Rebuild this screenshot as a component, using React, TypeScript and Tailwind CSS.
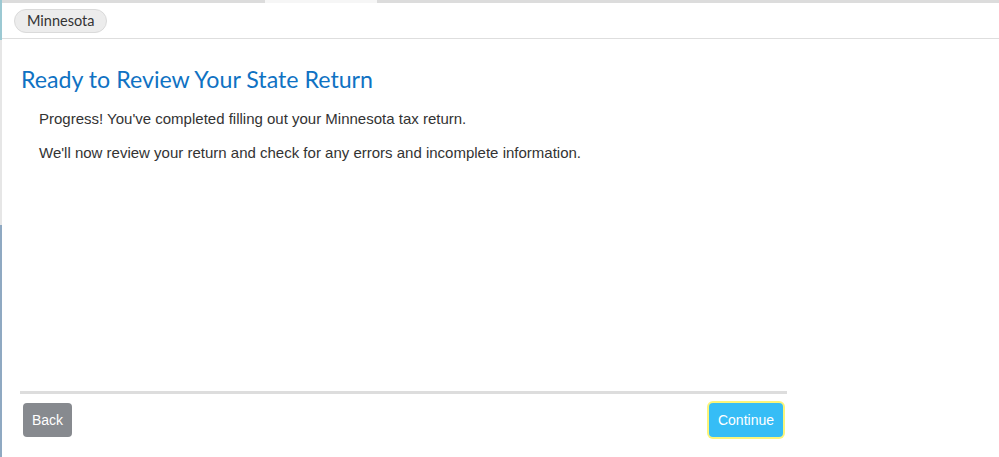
import React from "react";

export default function App() {
  return (
    <div className="w-[999px] h-[457px] bg-white overflow-hidden flex">
      <div className="w-[2px] flex flex-col shrink-0">
        <div className="h-[40px] bg-[#9cc9d3]" />
        <div className="h-[185px] bg-[#e6e6e6]" />
        <div className="flex-1 bg-[#8fa9c2]" />
      </div>
      <div className="flex-1 flex flex-col">
        <div className="h-[3px] flex">
          <div className="w-[263px] bg-[#dcdcdc]" />
          <div className="w-[112px] bg-[#f6f6f6]" />
          <div className="flex-1 bg-[#dcdcdc]" />
        </div>
        <div className="h-[36px] border-b border-[#dedede] flex items-center pl-[12px]">
          <span
            className="h-[24px] px-[12px] rounded-full bg-[#ececec] border border-[#dadada] text-[14.5px] text-[#333] flex items-center"
            style={{ fontFamily: "Lato, 'Open Sans', sans-serif" }}
          >
            Minnesota
          </span>
        </div>
        <div className="flex-1 flex flex-col w-[767px] ml-[18px]">
          <h1
            className="mt-[25px] text-[23.2px] leading-[30px] text-[#0f72c3] pl-[1px]"
            style={{ fontFamily: "Lato, 'Open Sans', sans-serif" }}
          >
            Ready to Review Your State Return
          </h1>
          <div
            className="pl-[19px] mt-[16px] text-[15px] text-[#333] flex flex-col gap-[16px]"
            style={{ fontFamily: "'Liberation Sans', Arial, sans-serif" }}
          >
            <p className="leading-[18px]">Progress! You've completed filling out your Minnesota tax return.</p>
            <p className="leading-[18px]">We'll now review your return and check for any errors and incomplete information.</p>
          </div>
          <div className="flex-1" />
          <div className="h-[3px] bg-[#dddddd]" />
          <div
            className="flex justify-between items-center mt-[9px] mb-[20px] pl-[3px] pr-[4px]"
            style={{ fontFamily: "'Liberation Sans', Arial, sans-serif" }}
          >
            <button className="h-[34px] px-[9px] rounded-[4px] bg-[#878a8f] text-white text-[14px]">Back</button>
            <button className="h-[34px] px-[9px] rounded-[4px] bg-[#36bdf6] text-white text-[14px] ring-2 ring-[#fbf57a]">
              Continue
            </button>
          </div>
        </div>
      </div>
    </div>
  );
}
